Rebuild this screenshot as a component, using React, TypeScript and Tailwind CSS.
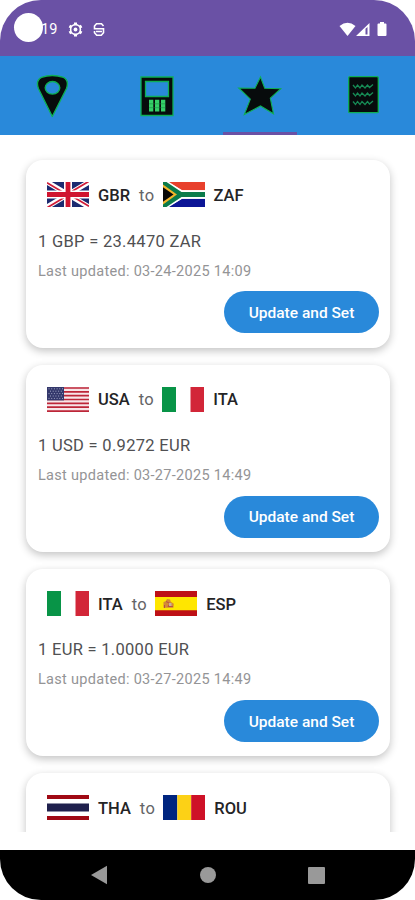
import type { ReactNode } from "react";

type FlagCode = "GBR" | "ZAF" | "USA" | "ITA" | "ESP" | "THA" | "ROU";

interface Favorite {
  from: FlagCode;
  to: FlagCode;
  rate: string;
  updated: string;
}

const favorites: Favorite[] = [
  { from: "GBR", to: "ZAF", rate: "1 GBP = 23.4470 ZAR", updated: "03-24-2025 14:09" },
  { from: "USA", to: "ITA", rate: "1 USD = 0.9272 EUR", updated: "03-27-2025 14:49" },
  { from: "ITA", to: "ESP", rate: "1 EUR = 1.0000 EUR", updated: "03-27-2025 14:49" },
  { from: "THA", to: "ROU", rate: "", updated: "" },
];

// All flags share a 42x25 canvas
const flags: Record<FlagCode, ReactNode> = {
  GBR: (
    <>
      <path fill="#1c2a70" d="M0 0h42v25H0z" />
      <path stroke="#fff" strokeWidth="5" d="M0 0l42 25M42 0L0 25" />
      <path stroke="#d01c38" strokeWidth="1.7" d="M0 .8l21 12.5M42 24.2L21 11.7M42 -.8L21 11.7M0 25.8l21-12.5" />
      <path stroke="#fff" strokeWidth="8" d="M21 0v25M0 12.5h42" />
      <path stroke="#d0142f" strokeWidth="4.8" d="M21 0v25M0 12.5h42" />
    </>
  ),
  ZAF: (
    <>
      <path fill="#fff" d="M0 0h42v25H0z" />
      <path fill="#e8402c" d="M5 0h37v8.2H19z" />
      <path fill="#0c1596" d="M5 25h37v-8.2H19z" />
      <path fill="#fff" d="M0 0h6l13 8.2h23v8.6H19L6 25H0z" />
      <path fill="#0b7b4b" d="M0 0h3.5L18.5 10H42v5H18.5L3.5 25H0z" />
      <path fill="#f3b52b" d="M0 2.6l14 9.9L0 22.4z" />
      <path fill="#080808" d="M0 5.2l10.5 7.3L0 19.8z" />
    </>
  ),
  USA: (
    <>
      <path fill="#f7e6e8" d="M0 0h42v25H0z" />
      <path stroke="#bd2638" strokeWidth="1.7" d="M0 1h42M0 4.8h42M0 8.7h42M0 12.5h42M0 16.4h42M0 20.2h42M0 24.1h42" />
      <path fill="#34386c" d="M0 0h17v13.4H0z" />
      <path
        stroke="#aeb2ce"
        strokeWidth=".9"
        strokeDasharray="1 1.7"
        d="M1.5 1.8h14.5M3 4.2h13M1.5 6.6h14.5M3 9h13M1.5 11.4h14.5"
      />
    </>
  ),
  ITA: (
    <>
      <path fill="#fff" d="M0 0h42v25H0z" />
      <path fill="#089447" d="M0 0h14v25H0z" />
      <path fill="#d22638" d="M28.5 0H42v25H28.5z" />
    </>
  ),
  ESP: (
    <>
      <path fill="#be1016" d="M0 0h42v25H0z" />
      <path fill="#ffe600" d="M0 6h42v13.2H0z" />
      <path fill="#d48a35" d="M8.5 16.8V11l2.2-.8L12 8l3 .6.8 2.2 3 2-.4 4z" />
      <path stroke="#b74f48" strokeWidth="1" d="M11 10.5l4 2-2 3h5M9.5 14v3" />
      <path fill="#c9b29a" d="M14 12h2.5v3H14z" />
    </>
  ),
  THA: (
    <>
      <path fill="#fff" d="M0 0h42v25H0z" />
      <path fill="#a00914" d="M0 0h42v4H0zM0 21h42v4H0z" />
      <path fill="#1f204d" d="M0 8.5h42v8H0z" />
    </>
  ),
  ROU: (
    <>
      <path fill="#00257f" d="M0 0h14.3v25H0z" />
      <path fill="#fcd116" d="M14.3 0h13.9v25H14.3z" />
      <path fill="#ce1127" d="M28.2 0H42v25H28.2z" />
    </>
  ),
};

function Flag({ code }: { code: FlagCode }) {
  return (
    <svg viewBox="0 0 42 25" width="42" height="25" fill="none" className="shrink-0">
      {flags[code]}
    </svg>
  );
}

function StatusBar() {
  return (
    <div className="flex h-14 shrink-0 items-start bg-[#6a51a5] pr-[28px] pl-[14px] text-white">
      <div className="mt-[13px] h-[29px] w-[29px] rounded-full bg-white" />
      <span className="mt-[20px] -ml-[2px] text-[14.5px] leading-[20px]">19</span>
      {/* Settings gear */}
      <svg className="mt-[22px] ml-[11px]" width="15" height="15" viewBox="0 0 15 15" fill="none" stroke="#fff">
        <circle cx="7.5" cy="7.5" r="4.9" strokeWidth="1.6" />
        <path
          strokeWidth="2.2"
          d="M6 1.6h3M6 13.4h3M1.6 5.9l1.5-2.6M11.9 3.3l1.5 2.6M1.6 9.1l1.5 2.6M11.9 11.7l1.5-2.6"
        />
        <circle cx="7.5" cy="7.5" r="1.9" fill="#fff" stroke="none" />
      </svg>
      <svg className="mt-[22px] ml-[10px]" width="12" height="15" viewBox="0 0 12 15" fill="none" stroke="#fff">
        <path strokeWidth="1.6" d="M10.5 4L8.500 1.800h-5L1.500 4v2.800h9v4L8.300 13.200H3.700L1.500 10.800V9" />
        <path strokeWidth="1.5" d="M3 9.5h6" />
      </svg>
      <div className="mt-[21px] ml-auto flex items-end">
        <svg width="17" height="16" viewBox="0 0 17 16" fill="#fff">
          <path d="M.5 5Q8.5-1.5 16.5 5L8.5 15z" />
        </svg>
        <svg width="14" height="16" viewBox="0 0 14 16" fill="#fff">
          <path fillRule="evenodd" d="M0 15L13.5 2v13zM9.5 7.8V13.5h2V5.9z" />
        </svg>
        <svg className="ml-[7px]" width="10" height="16" viewBox="0 0 10 16" fill="#fff">
          <path d="M3 1h4v1.5h1.5q1 0 1 1V14q0 1-1 1h-7q-1 0-1-1V3.5q0-1 1-1H3z" />
        </svg>
      </div>
    </div>
  );
}

function TabBar() {
  return (
    <div className="grid h-[79px] shrink-0 grid-cols-4 bg-[#2989da]">
      <div className="flex justify-center pt-[18px]">
        <svg width="34" height="44" viewBox="0 0 34 44" fill="#070b0c" stroke="#0eaf55" strokeWidth="1.4">
          <path
            fillRule="evenodd"
            strokeLinejoin="round"
            d="M17.3 42.5L3.4 14.5C1.4 9 2.3 5.5 6.5 3.3Q17-.2 28.5 3.3C32.7 5.5 33.4 9 31.5 14.5zM17.500 7.500c-4.200 0-7.300 3-7.300 6.300s3.100 6.300 7.300 6.300 7.300-3 7.300-6.300-3.100-6.300-7.300-6.300z"
          />
        </svg>
      </div>
      <div className="flex justify-center pt-[20px] pl-[2px]">
        <svg width="34" height="41" viewBox="0 0 34 41" fill="none">
          <path fill="#070b0c" stroke="#0eaf55" strokeWidth="1.3" d="M1 1h32v38.5H1z" />
          <path fill="#2989da" stroke="#0eaf55" strokeWidth="1.3" d="M5.5 5.5h23v15h-23z" />
          <path fill="#35cf68" d="M9 23.8h4.3v11.8H9zM15 23.8h4.3v11.8H15zM21 23.8h4.3v11.8H21z" />
          <path stroke="#128040" strokeWidth=".5" d="M9 27.8h16.3M9 31.7h16.3" />
        </svg>
      </div>
      {/* Active tab */}
      <div className="flex flex-col items-center justify-between pt-[19px] pl-[2px]">
        <svg width="46" height="42" viewBox="0 0 46 42" fill="#070b0c" stroke="#0eaf55" strokeWidth="1.1">
          <path d="M23.500 2l4.200 11.200 16.100.5L33.300 23.200 36.500 38.800 23.500 31 7.300 39.500l6-15.300L1.700 13l16.300.2z" />
        </svg>
        <div className="h-[3px] w-[74px] bg-[#6a51a5]" />
      </div>
      <div className="flex justify-center pt-[20px]">
        <svg width="31" height="38" viewBox="0 0 31 38" fill="none" stroke="#0eaf55">
          <rect x=".7" y=".7" width="29.6" height="36" rx="1" fill="#070b0c" strokeWidth="1.3" />
          <path
            stroke="#168b55"
            strokeWidth="1.3"
            d="M5 9l2.5 3 2-3 2.5 3 2-3 3 3 2.5-3 2 2.5 3.5-3M5 17l2.5 3 2-3 2.5 3 2-3 3 3 2.5-3 2 2.5 3.5-3M5 25.5l2.5 3 2-3 2.5 3 2-3 3 3 2.5-3 2 2.5 3.5-3"
          />
        </svg>
      </div>
    </div>
  );
}

function FavoriteCard({ favorite }: { favorite: Favorite }) {
  return (
    <div className="h-[187.5px] shrink-0 rounded-[17px] bg-white pt-[22px] pr-[11px] pl-[12.5px] shadow-[0_3px_8px_rgba(0,0,0,0.24)]">
      <div className="flex h-[25px] items-center pl-[9px] text-[16.5px] text-[#242426]">
        <Flag code={favorite.from} />
        <span className="mt-[3px] ml-[9px] font-medium">{favorite.from}</span>
        <span className="mt-[3px] mr-[8px] ml-[9px] tracking-[0.4px] text-[#646466]">to</span>
        <Flag code={favorite.to} />
        <span className="mt-[3px] ml-[9px] font-medium">{favorite.to}</span>
      </div>
      {favorite.rate && (
        <>
          <p className="mt-[22.5px] text-[16.5px] leading-[24px] tracking-[0.3px] text-[#505052]">{favorite.rate}</p>
          <p className="mt-[8px] text-[14.5px] leading-[20px] tracking-[0.3px] text-[#949496]">
            Last updated: {favorite.updated}
          </p>
          <div className="mt-[9.5px] flex justify-end">
            <button className="h-[42px] w-[155px] rounded-full bg-[#2989da] pt-[3px] text-[15.5px] font-medium text-white">
              Update and Set
            </button>
          </div>
        </>
      )}
    </div>
  );
}

function NavigationBar() {
  return (
    <div className="flex h-[50px] shrink-0 items-center justify-between bg-black pr-[90.5px] pl-[90.5px]">
      <svg width="17" height="20" viewBox="0 0 17 20" fill="#999">
        <path d="M0 10L16 .8v18.4z" />
      </svg>
      <div className="h-[16px] w-[16px] rounded-full bg-[#999]" />
      <div className="h-[17px] w-[17px] rounded-[1px] bg-[#999]" />
    </div>
  );
}

export default function App() {
  return (
    <div className="h-[900px] w-[415px] bg-white font-['Roboto',sans-serif]">
      <div className="flex h-full flex-col overflow-hidden rounded-[41px] bg-white">
        <StatusBar />
        <TabBar />
        <div className="mb-[18px] flex min-h-0 flex-1 flex-col gap-[16.8px] overflow-hidden pt-[25.3px] pr-[25px] pl-[25.5px]">
          {favorites.map((favorite) => (
            <FavoriteCard key={favorite.from} favorite={favorite} />
          ))}
        </div>
        <NavigationBar />
      </div>
    </div>
  );
}
